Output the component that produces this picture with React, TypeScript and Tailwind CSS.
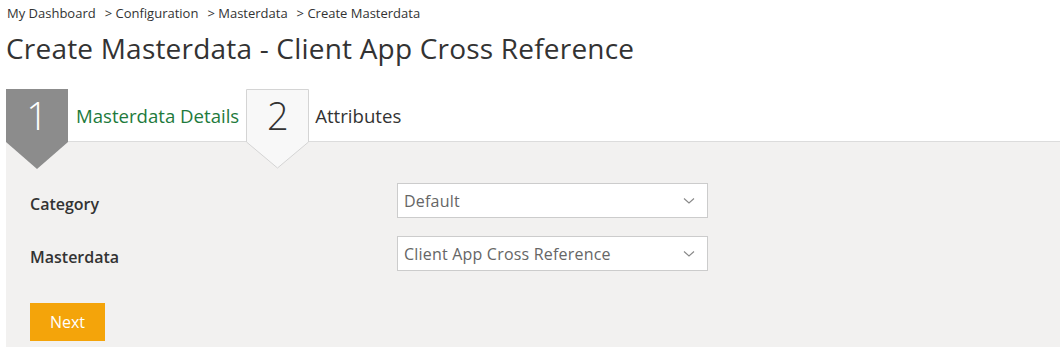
import React from "react";

const font = { fontFamily: '"Open Sans", "Noto Sans", sans-serif' };

function Chevron() {
  return (
    <svg width="12" height="8" viewBox="0 0 12 8" className="text-[#888]">
      <path d="M1 1.5 L6 6 L11 1.5" fill="none" stroke="currentColor" strokeWidth="1.1" />
    </svg>
  );
}

function Select({ value }: { value: string }) {
  return (
    <div className="flex h-[35px] w-[311px] items-center justify-between border border-[#cccccc] bg-white pl-[6px] pr-[12px]">
      <span className="text-[16px] tracking-[0.2px] text-[#666666]">{value}</span>
      <Chevron />
    </div>
  );
}

export default function App() {
  return (
    <div className="min-h-[348px] bg-white text-[#333]" style={font}>
      <div className="flex items-center pl-[7px] pt-[4px] text-[13px] leading-[18px] text-[#333]">
        <span>My Dashboard</span>
        <span className="ml-[9px]">&gt; Configuration</span>
        <span className="ml-[9px]">&gt; Masterdata</span>
        <span className="ml-[9px]">&gt; Create Masterdata</span>
      </div>
      <h1 className="mt-[9px] pl-[6px] text-[28px] font-normal leading-[34px] tracking-[0.2px] text-[#333]">
        Create Masterdata - Client App Cross Reference
      </h1>
      <div className="relative z-10 mt-[24px] flex h-[52px] items-stretch pl-[6px]">
        <div className="relative w-[62px]">
          <svg className="absolute left-0 top-0" width="62" height="80" viewBox="0 0 62 80">
            <polygon points="0,0 62,0 62,53 31,80 0,53" fill="#8c8c8c" />
          </svg>
          <div className="relative flex h-[52px] items-center justify-center text-[38px] font-light text-white">1</div>
        </div>
        <div className="ml-[8px] flex items-center pt-[2px] text-[18.6px] text-[#1e7a3c]">Masterdata Details</div>
        <div className="relative ml-[7px] w-[63px]">
          <svg className="absolute left-0 top-0" width="63" height="80" viewBox="0 0 63 80">
            <polygon points="0.5,0.5 62.5,0.5 62.5,53 31.5,79 0.5,53" fill="#f8f8f8" stroke="#d4d4d4" strokeWidth="1" />
          </svg>
          <div className="relative flex h-[52px] items-center justify-center text-[38px] font-light text-[#333]">2</div>
        </div>
        <div className="ml-[6px] flex items-center pt-[2px] text-[18.6px] text-[#333]">Attributes</div>
      </div>
      <div className="ml-[6px] h-[206px] border-t border-[#dcdcdc] bg-[#f2f1f0] pl-[24px] pt-[41px]">
        <div className="flex items-center">
          <div className="w-[367px] pt-[6px] text-[16px] font-semibold text-[#333]">Category</div>
          <Select value="Default" />
        </div>
        <div className="mt-[18px] flex items-center">
          <div className="w-[367px] pt-[6px] text-[16px] font-semibold text-[#333]">Masterdata</div>
          <Select value="Client App Cross Reference" />
        </div>
        <button className="mt-[32px] flex h-[38px] w-[75px] items-center justify-center bg-[#f4a40a] text-[16px] text-white">
          Next
        </button>
      </div>
    </div>
  );
}
